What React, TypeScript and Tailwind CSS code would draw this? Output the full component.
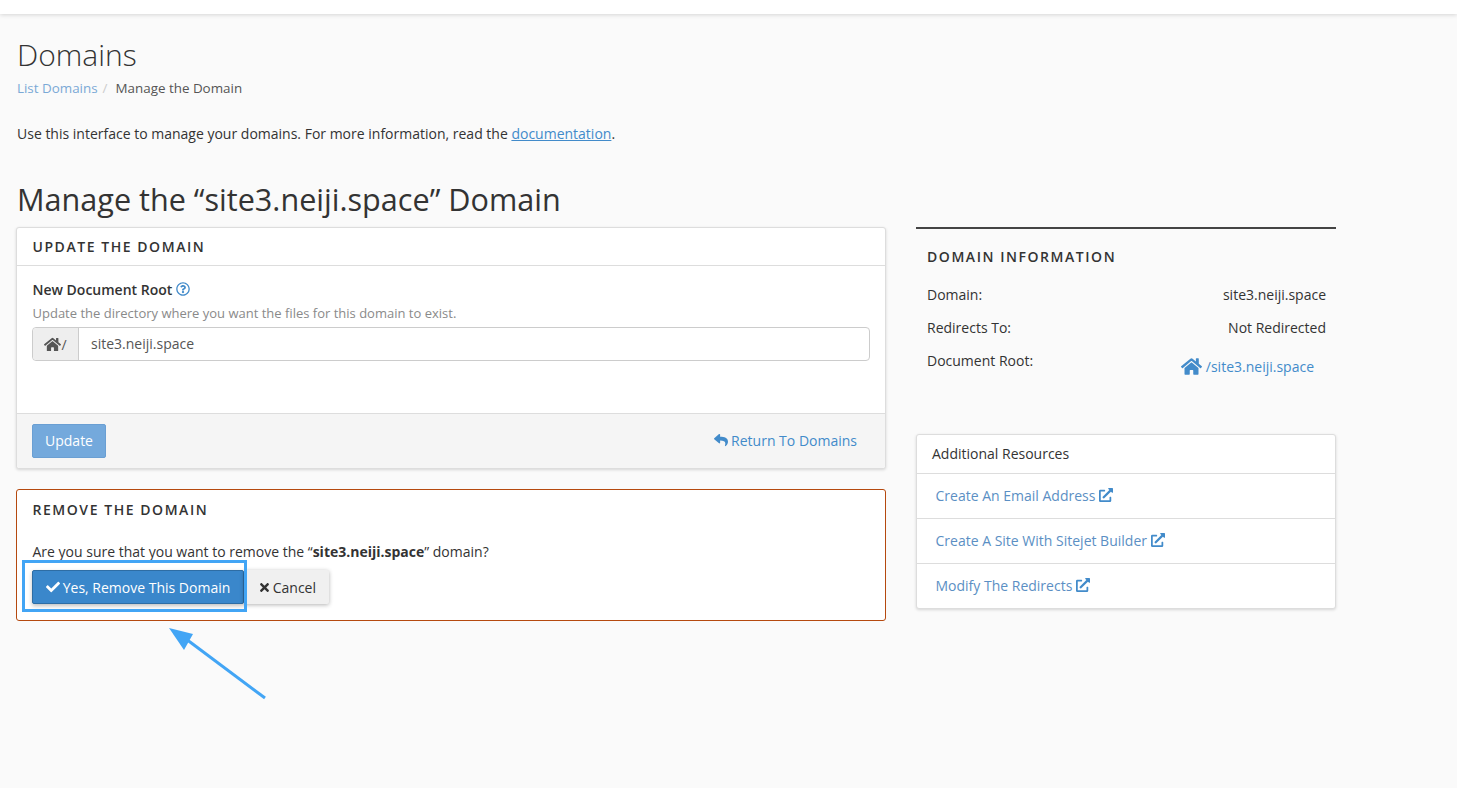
import React from "react";
import { FaHome, FaCheck, FaTimes, FaReply, FaExternalLinkAlt, FaRegQuestionCircle } from "react-icons/fa";

function Resource({ label }: { label: string }) {
  return (
    <div className="h-[45px] border-t border-[#ddd] pl-[18.5px] pb-[2px] flex items-center text-[#5b8fc4]">
      <span>{label}</span>
      <FaExternalLinkAlt className="ml-[4px] text-[14px] text-[#428bca]" />
    </div>
  );
}

function InfoRow({ label, value }: { label: string; value: string }) {
  return (
    <div className="flex justify-between h-[33px] items-center">
      <span>{label}</span>
      <span>{value}</span>
    </div>
  );
}

export default function App() {
  return (
    <div className="relative min-h-[788px] bg-[#fafafa] text-[14px] text-[#333] font-['Open_Sans',sans-serif] overflow-hidden">
      <div className="h-[14px] bg-white shadow-[0_1px_4px_rgba(0,0,0,0.15)]" />
      <div className="pl-[16px] pt-[20px]">
        <h1 className="text-[30px] leading-[41px] font-light text-[#333] pl-[1px]">Domains</h1>
        <div className="mt-[3px] h-[20px] leading-[20px] flex pl-[1px] text-[13.4px]">
          <span className="text-[#7ba9d6]">List Domains</span>
          <span className="text-[#ccc] ml-[5px] mr-[8px]">/</span>
          <span className="text-[#555]">Manage the Domain</span>
        </div>
        <p className="mt-[26px] h-[20px] leading-[20px] pl-[1px]">
          Use this interface to manage your domains. For more information, read the{" "}
          <span className="text-[#428bca] underline">documentation</span>.
        </p>
        <h2 className="mt-[35px] text-[30.6px] leading-[41px] font-normal text-[#333] pl-[1px]">
          Manage the “site3.neiji.space” Domain
        </h2>
        <div className="flex gap-[30px] mt-[7px] items-start">
          <div className="w-[870px]">
            <section className="h-[242px] bg-white border border-[#ddd] rounded-[3px] shadow-[0_1px_3px_rgba(0,0,0,0.15)] flex flex-col">
              <div className="h-[38px] border-b border-[#ddd] pl-[15.5px] pr-[15px] flex items-center text-[14px] font-semibold tracking-[1.55px] uppercase">
                Update the Domain
              </div>
              <div className="flex-1 px-[15px] pt-[13px]">
                <div className="flex items-center h-[20px] font-semibold pl-[0.5px]">
                  New Document Root
                  <FaRegQuestionCircle className="ml-[4px] text-[14px] text-[#428bca]" />
                </div>
                <div className="mt-[5px] h-[18px] leading-[18px] text-[13px] text-[#8a8a8a] pl-[0.5px]">
                  Update the directory where you want the files for this domain to exist.
                </div>
                <div className="mt-[5px] h-[34px] flex border border-[#ccc] rounded-[4px] bg-white">
                  <div className="w-[46px] bg-[#eee] border-r border-[#ccc] rounded-l-[4px] flex items-center justify-center text-[#555]">
                    <FaHome className="text-[17px]" />
                    <span className="text-[14px]">/</span>
                  </div>
                  <div className="flex-1 pl-[12px] pb-[2px] flex items-center text-[#555]">site3.neiji.space</div>
                </div>
              </div>
              <div className="h-[55px] bg-[#f5f5f5] border-t border-[#ddd] rounded-b-[3px] pl-[15px] pr-[28px] flex items-center justify-between">
                <div className="w-[74px] h-[34px] bg-[#74a9dc] border border-[#6a9fd3] rounded-[2px] pb-[2px] text-white flex items-center justify-center">
                  Update
                </div>
                <div className="flex items-center pb-[2px] text-[#428bca]">
                  <FaReply className="text-[14px] mr-[3px]" />
                  Return To Domains
                </div>
              </div>
            </section>
            <section className="mt-[20px] h-[132px] bg-white border border-[#b5490f] rounded-[3px] pl-[15.5px] pr-[15px]">
              <div className="mt-[10px] h-[20px] leading-[20px] font-semibold tracking-[1.55px] uppercase">
                Remove the Domain
              </div>
              <p className="mt-[22px] h-[20px] leading-[20px]">
                Are you sure that you want to remove the “<b className="font-bold">site3.neiji.space</b>” domain?
              </p>
              <div className="mt-[8px] -ml-[0.5px] flex">
                <div className="w-[212px] h-[34px] bg-[#3a87cb] border border-[#2e6da4] rounded-[2px] text-white flex items-center justify-center shadow-[0_2px_4px_rgba(0,0,0,0.25)]">
                  <FaCheck className="text-[14px] mr-[3px]" />
                  Yes, Remove This Domain
                </div>
                <div className="w-[85px] h-[34px] bg-[#f0f0f0] rounded-[2px] flex items-center justify-end pr-[13px] shadow-[0_1px_4px_rgba(0,0,0,0.3)]">
                  <FaTimes className="text-[13px] mr-[2px]" />
                  Cancel
                </div>
              </div>
            </section>
          </div>
          <aside className="w-[420px]">
            <div className="border-t-2 border-[#444] pl-[11px] pr-[10px]">
              <div className="mt-[18px] h-[20px] leading-[20px] font-semibold tracking-[1.55px] uppercase">
                Domain Information
              </div>
              <div className="mt-[11px]">
                <InfoRow label="Domain:" value="site3.neiji.space" />
                <InfoRow label="Redirects To:" value="Not Redirected" />
              </div>
              <div className="flex justify-between h-[40px]">
                <span className="mt-[7px] h-[20px] leading-[20px]">Document Root:</span>
                <span className="mt-[8px] mr-[12px] flex items-center h-[28px] text-[#428bca]">
                  <FaHome className="text-[21px] mr-[4px]" />
                  /site3.neiji.space
                </span>
              </div>
            </div>
            <div className="mt-[50px] bg-white border border-[#ddd] rounded-[3px] shadow-[0_1px_3px_rgba(0,0,0,0.15)]">
              <div className="h-[38px] px-[15px] pb-[2px] flex items-center">Additional Resources</div>
              <Resource label="Create An Email Address" />
              <Resource label="Create A Site With Sitejet Builder" />
              <Resource label="Modify The Redirects" />
            </div>
          </aside>
        </div>
      </div>
      <div className="absolute left-[22px] top-[560px] w-[225px] h-[52px] border-[3px] border-[#42a5f5]" />
      <svg className="absolute left-[160px] top-[620px]" width="115" height="85" viewBox="0 0 115 85">
        <line x1="105" y1="78" x2="22" y2="16" stroke="#42a5f5" strokeWidth="3" />
        <polygon points="9,8 33,14 24,30" fill="#42a5f5" />
      </svg>
    </div>
  );
}
